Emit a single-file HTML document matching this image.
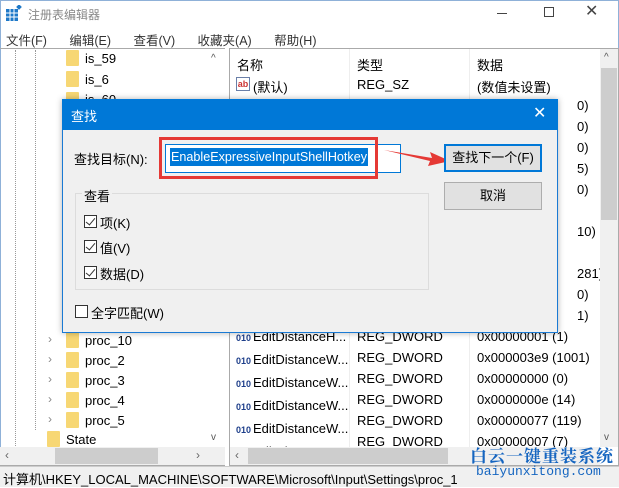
<!DOCTYPE html>
<html><head><meta charset="utf-8"><style>
*{margin:0;padding:0;box-sizing:border-box}
body{width:619px;height:487px;overflow:hidden;background:#fff;font-family:"Liberation Sans","Noto Sans CJK SC",sans-serif;font-size:12px;color:#000;position:relative}
.a{position:absolute;white-space:nowrap}
.fold{position:absolute;width:13px;height:16px;background:#f7d774;border-radius:1px}
.ic{position:absolute;width:14px;height:14px;border:1px solid #6a7fa8;background:#fff;font-size:7px;line-height:6px;color:#1d3e8a;font-weight:bold;text-align:center}
.cb{position:absolute;width:13px;height:13px;border:1px solid #333;background:#fff}
.cb.c::after{content:"";position:absolute;left:3px;top:0px;width:4px;height:8px;border:solid #333;border-width:0 1.5px 1.5px 0;transform:rotate(40deg)}
</style></head><body>
<div class="a" style="left:0;top:0;width:619px;height:487px;border:1px solid #8fb1d8"></div>
<svg class="a" style="left:6px;top:5px" width="16" height="16"><rect x="0" y="4" width="12" height="12" fill="#1e78c8"/><path d="M0 8h12M0 12h12M4 4v12M8 4v12" stroke="#fff" stroke-width="1"/><rect x="11" y="0" width="4" height="4" fill="#1e78c8" transform="rotate(45 13 2)"/></svg>
<div class="a" style="left:28px;top:6px;color:#888;font-size:12px">注册表编辑器</div>
<div class="a" style="left:497px;top:13px;width:10px;height:1px;background:#444"></div>
<div class="a" style="left:544px;top:7px;width:10px;height:10px;border:1px solid #444"></div>
<div class="a" style="left:585px;top:1px;font-size:16px;color:#444">✕</div>
<div class="a" style="left:6px;top:30px;color:#333;font-size:12.5px;word-spacing:4px">文件(F)&nbsp;&nbsp;&nbsp;编辑(E)&nbsp;&nbsp;&nbsp;查看(V)&nbsp;&nbsp;&nbsp;收藏夹(A)&nbsp;&nbsp;&nbsp;帮助(H)</div>
<div class="a" style="left:0;top:48px;width:225px;height:418px;border:1px solid #aaa;border-left:none"></div>
<div class="a" style="left:229px;top:48px;width:390px;height:418px;border:1px solid #aaa"></div>
<div class="a" style="left:15px;top:50px;height:396px;border-left:1px dotted #999"></div>
<div class="a" style="left:35px;top:50px;height:380px;border-left:1px dotted #999"></div>
<div class="fold" style="left:66px;top:50px"></div><div class="a" style="left:85px;top:51px;font-size:13px">is_59</div>
<div class="fold" style="left:66px;top:71px"></div><div class="a" style="left:85px;top:72px;font-size:13px">is_6</div>
<div class="fold" style="left:66px;top:92px"></div><div class="a" style="left:85px;top:92px;font-size:13px">is_60</div>
<div class="a" style="left:48px;top:332px;color:#888">›</div><div class="fold" style="left:66px;top:332px"></div><div class="a" style="left:85px;top:333px;font-size:13px">proc_10</div>
<div class="a" style="left:48px;top:352px;color:#888">›</div><div class="fold" style="left:66px;top:352px"></div><div class="a" style="left:85px;top:353px;font-size:13px">proc_2</div>
<div class="a" style="left:48px;top:372px;color:#888">›</div><div class="fold" style="left:66px;top:372px"></div><div class="a" style="left:85px;top:373px;font-size:13px">proc_3</div>
<div class="a" style="left:48px;top:392px;color:#888">›</div><div class="fold" style="left:66px;top:392px"></div><div class="a" style="left:85px;top:393px;font-size:13px">proc_4</div>
<div class="a" style="left:48px;top:412px;color:#888">›</div><div class="fold" style="left:66px;top:412px"></div><div class="a" style="left:85px;top:413px;font-size:13px">proc_5</div>
<div class="fold" style="left:47px;top:431px"></div><div class="a" style="left:66px;top:432px;font-size:13px">State</div>
<div class="a" style="left:207px;top:49px;width:18px;height:398px;background:#fff"></div>
<div class="a" style="left:211px;top:53px;font-size:10px;color:#555">^</div>
<div class="a" style="left:211px;top:432px;font-size:10px;color:#555">v</div>
<div class="a" style="left:0;top:447px;width:225px;height:18px;background:#f0f0f0"></div>
<div class="a" style="left:55px;top:448px;width:103px;height:16px;background:#cdcdcd"></div>
<div class="a" style="left:5px;top:448px;color:#666">‹</div><div class="a" style="left:196px;top:448px;color:#666">›</div>
<div class="a" style="left:349px;top:49px;height:398px;border-left:1px solid #eee"></div>
<div class="a" style="left:469px;top:49px;height:398px;border-left:1px solid #eee"></div>
<div class="a" style="left:237px;top:55px;font-size:13px">名称</div>
<div class="a" style="left:357px;top:55px;font-size:13px">类型</div>
<div class="a" style="left:477px;top:55px;font-size:13px">数据</div>
<div class="ic" style="left:236px;top:77px;color:#c33;font-size:9px;line-height:12px">ab</div>
<div class="a" style="left:253px;top:77px;font-size:13px">(默认)</div>
<div class="a" style="left:357px;top:77px;font-size:13px">REG_SZ</div>
<div class="a" style="left:477px;top:77px;font-size:13px">(数值未设置)</div>
<div class="a" style="left:577px;top:95px;font-size:13px;line-height:21px">0)<br>0)<br>0)<br>5)<br>0)<br><br>10)<br><br>281)<br>0)<br>1)</div>
<div class="a" style="left:236px;top:326px;font-size:13px;line-height:21px">
<div><span style="display:inline-block;width:17px;color:#1d3e8a;font-size:9px;font-weight:bold">010</span>EditDistanceH...</div>
<div><span style="display:inline-block;width:17px;color:#1d3e8a;font-size:9px;font-weight:bold">010</span>EditDistanceW...</div>
<div><span style="display:inline-block;width:17px;color:#1d3e8a;font-size:9px;font-weight:bold">010</span>EditDistanceW...</div>
<div><span style="display:inline-block;width:17px;color:#1d3e8a;font-size:9px;font-weight:bold">010</span>EditDistanceW...</div>
<div><span style="display:inline-block;width:17px;color:#1d3e8a;font-size:9px;font-weight:bold">010</span>EditDistanceW...</div>
<div><span style="display:inline-block;width:17px;color:#1d3e8a;font-size:9px;font-weight:bold">010</span>EditDistanceW...</div></div>
<div class="a" style="left:357px;top:326px;font-size:13px;line-height:21px">REG_DWORD<br>REG_DWORD<br>REG_DWORD<br>REG_DWORD<br>REG_DWORD<br>REG_DWORD</div>
<div class="a" style="left:477px;top:326px;font-size:13px;line-height:21px">0x00000001 (1)<br>0x000003e9 (1001)<br>0x00000000 (0)<br>0x0000000e (14)<br>0x00000077 (119)<br>0x00000007 (7)</div>
<div class="a" style="left:600px;top:49px;width:18px;height:398px;background:#f0f0f0"></div>
<div class="a" style="left:601px;top:68px;width:16px;height:152px;background:#cdcdcd"></div>
<div class="a" style="left:604px;top:52px;font-size:10px;color:#555">^</div>
<div class="a" style="left:604px;top:432px;font-size:10px;color:#555">v</div>
<div class="a" style="left:230px;top:447px;width:370px;height:18px;background:#f0f0f0"></div>
<div class="a" style="left:248px;top:448px;width:200px;height:16px;background:#cdcdcd"></div>
<div class="a" style="left:235px;top:448px;color:#666">‹</div>
<div class="a" style="left:0;top:466px;width:619px;height:21px;background:#f0f0f0;border-top:1px solid #ccc"></div>
<div class="a" style="left:3px;top:469px;font-size:13px">计算机\HKEY_LOCAL_MACHINE\SOFTWARE\Microsoft\Input\Settings\proc_1</div>
<div class="a" style="left:470px;top:442px;font-size:17px;font-weight:bold;color:#1565c0;letter-spacing:1px;font-family:'Noto Serif CJK SC',serif">白云一键重装系统</div>
<div class="a" style="left:476px;top:464px;font-size:13px;color:#1565c0;font-family:'Liberation Mono',monospace">baiyunxitong.com</div>
<div class="a" style="left:62px;top:99px;width:496px;height:234px;background:#f0f0f0;border:1px solid #1a7ad4;box-shadow:0 0 6px rgba(0,0,0,.3)"></div>
<div class="a" style="left:62px;top:99px;width:496px;height:31px;background:#0078d7"></div>
<div class="a" style="left:71px;top:106px;color:#fff;font-size:13px">查找</div>
<div class="a" style="left:533px;top:103px;color:#fff;font-size:16px">✕</div>
<div class="a" style="left:74px;top:149px;font-size:13px">查找目标(N):</div>
<div class="a" style="left:165px;top:144px;width:236px;height:29px;background:#fff;border:1px solid #0078d7"></div>
<div class="a" style="left:170px;top:148px;height:18px;background:#0078d7;color:#fff;font-size:12.6px;line-height:18px;padding:0 1px">EnableExpressiveInputShellHotkey</div>
<div class="a" style="left:159px;top:137px;width:219px;height:42px;border:3px solid #e53935"></div>
<svg class="a" style="left:384px;top:144px" width="70" height="26"><path d="M0 6 L48 14 L46 8 L66 17 L44 22 L46 17 Z" fill="#e53935"/></svg>
<div class="a" style="left:444px;top:144px;width:98px;height:28px;background:#e1e1e1;border:2px solid #0078d7;text-align:center;line-height:24px;font-size:13px">查找下一个(F)</div>
<div class="a" style="left:444px;top:182px;width:98px;height:28px;background:#e1e1e1;border:1px solid #adadad;text-align:center;line-height:26px;font-size:13px">取消</div>
<div class="a" style="left:75px;top:193px;width:354px;height:97px;border:1px solid #dcdcdc"></div>
<div class="a" style="left:82px;top:186px;background:#f0f0f0;padding:0 2px;font-size:13px">查看</div>
<div class="cb c" style="left:84px;top:215px"></div><div class="a" style="left:100px;top:213px;font-size:13px">项(K)</div>
<div class="cb c" style="left:84px;top:240px"></div><div class="a" style="left:100px;top:238px;font-size:13px">值(V)</div>
<div class="cb c" style="left:84px;top:266px"></div><div class="a" style="left:100px;top:264px;font-size:13px">数据(D)</div>
<div class="cb" style="left:75px;top:305px"></div><div class="a" style="left:91px;top:303px;font-size:13px">全字匹配(W)</div>
</body></html>
